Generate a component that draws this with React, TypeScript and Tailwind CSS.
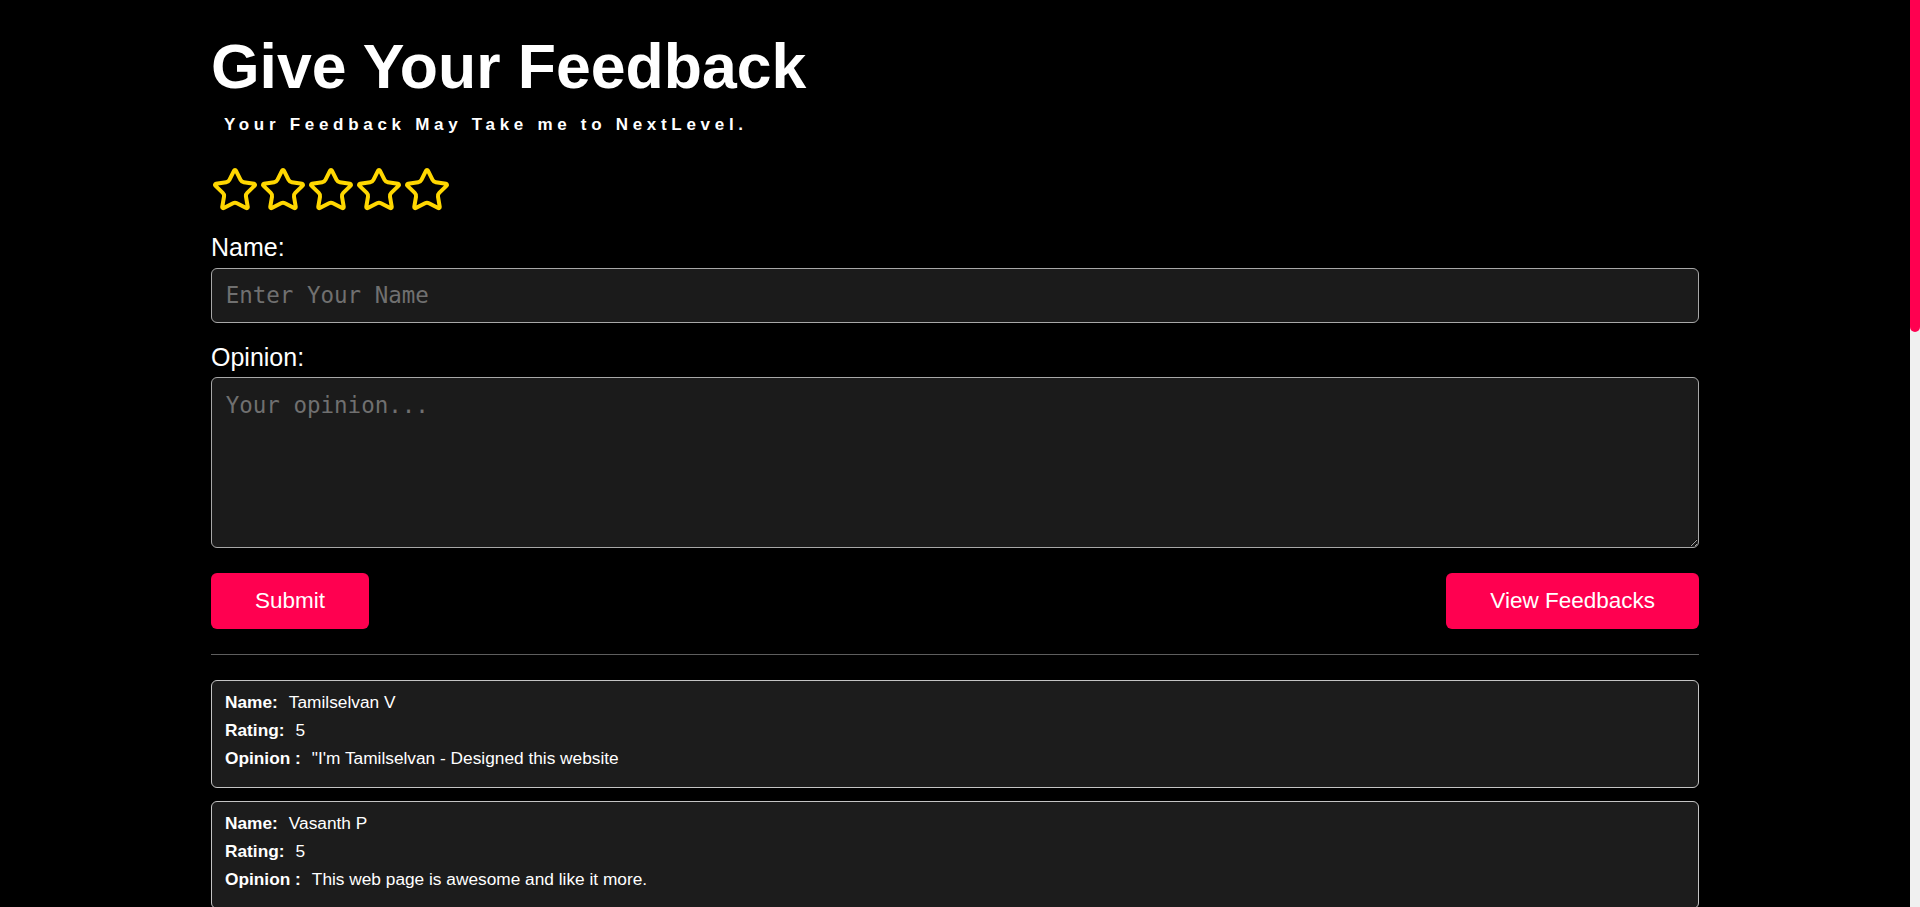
import React from "react";
import { Star } from "lucide-react";

const feedbacks = [
  { name: "Tamilselvan V", rating: 5, opinion: "\"I'm Tamilselvan - Designed this website" },
  { name: "Vasanth P", rating: 5, opinion: "This web page is awesome and like it more." },
];

export default function App() {
  return (
    <div className="flex h-[907px] overflow-hidden bg-black">
      <div className="min-w-0 flex-1 overflow-hidden">
        <div className="mx-auto w-[1488px] pt-[31px] font-['Liberation_Sans',Arial,sans-serif] text-white">
          <h1 className="text-[62.5px] leading-[71px] font-bold">Give Your Feedback</h1>
          <p className="mt-[13px] pl-[13px] text-[17px] leading-[19.5px] font-bold tracking-[4.7px]">
            Your Feedback May Take me to NextLevel.
          </p>
          <div className="mt-[31px] flex">
            {[0, 1, 2, 3, 4].map((i) => (
              <Star key={i} size={48} strokeWidth={2} color="#ffd700" fill="none" />
            ))}
          </div>
          <label className="mt-[19.4px] block text-[25px] leading-[28.75px]">Name:</label>
          <input
            type="text"
            placeholder="Enter Your Name"
            className="mt-[6px] block h-[55px] w-full rounded-[6px] border border-[#a8a8a8] bg-[#1b1b1b] px-[13.7px] font-['DejaVu_Sans_Mono',monospace] text-[22.5px] leading-[26px] text-white outline-none placeholder:text-[#707070]"
          />
          <label className="mt-[20px] block text-[25px] leading-[28.75px]">Opinion:</label>
          <textarea
            placeholder="Your opinion..."
            className="mt-[5.5px] block h-[171.6px] w-full rounded-[6px] border border-[#a8a8a8] bg-[#1b1b1b] px-[13.7px] pt-[14px] font-['DejaVu_Sans_Mono',monospace] text-[22.5px] leading-[26px] text-white outline-none placeholder:text-[#707070]"
          />
          <div className="mt-[25px] flex justify-between">
            <button className="rounded-[6px] bg-[#ff0050] px-[44px] py-[15px] text-[22.5px] leading-[26px] text-white">
              Submit
            </button>
            <button className="rounded-[6px] bg-[#ff0050] px-[44px] py-[15px] text-[22.5px] leading-[26px] text-white">
              View Feedbacks
            </button>
          </div>
          <div className="mt-[25px] h-px bg-[#5e5e5e]" />
          <div className="mt-[25px] flex flex-col gap-[13.6px]">
            {feedbacks.map((f) => (
              <div
                key={f.name}
                className="rounded-[6px] border border-[#c4c4c4] bg-[#1c1c1c] px-[13px] pt-[7.5px] pb-[14.5px] text-[17.3px] leading-[27.8px]"
              >
                <p>
                  <span className="mr-[11px] font-bold">Name:</span>
                  {f.name}
                </p>
                <p>
                  <span className="mr-[11px] font-bold">Rating:</span>
                  {f.rating}
                </p>
                <p>
                  <span className="mr-[11px] font-bold">Opinion :</span>
                  {f.opinion}
                </p>
              </div>
            ))}
          </div>
        </div>
      </div>
      <div className="w-[10px] shrink-0 bg-[#f0f0f0]">
        <div className="h-[332px] rounded-b-[5px] bg-[#ff0050]" />
      </div>
    </div>
  );
}
